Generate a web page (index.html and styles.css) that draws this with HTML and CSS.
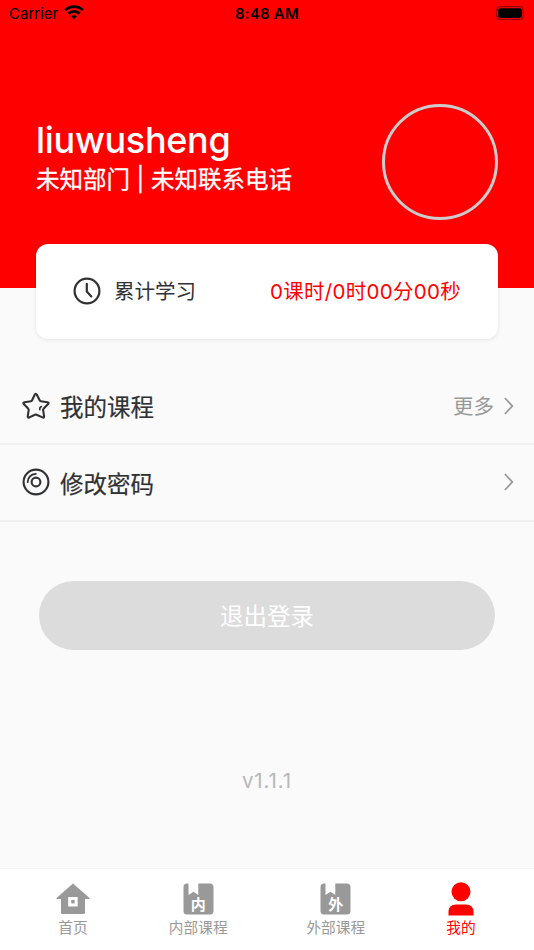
FILE: index.html
```html
<!DOCTYPE html>
<html lang="zh-CN">
<head>
<meta charset="utf-8">
<title>我的</title>
<link rel="stylesheet" href="styles.css">
</head>
<body>
<div class="app">
  <header class="hero">
    <div class="status">
      <div class="carrier"><span>Carrier</span>
        <svg width="20" height="15" viewBox="0 0 20 15" fill="none" stroke="#000" stroke-width="2.9"><path d="M1.2 5.2C6.2.4 13.8.4 18.8 5.2M4.4 8.6c3.2-3 8-3 11.2 0"/><path d="M10 14.2 7.1 11.3c1.7-1.5 4.1-1.5 5.8 0z" fill="#000" stroke="none"/></svg>
      </div>
      <div class="time">8:48 AM</div>
      <svg class="battery" width="32" height="15" viewBox="0 0 32 15"><rect x=".7" y=".7" width="26.6" height="12.8" rx="3.5" fill="none" stroke="#9b0000" stroke-width="1.2"/><rect x="2.2" y="2.2" width="23.6" height="9.8" rx="2"/><path d="M29 5q2.2 2.1 0 4.2z" fill="#9b0000"/></svg>
    </div>
    <div class="profile">
      <div class="who"><h1>liuwusheng</h1><p>未知部门 | 未知联系电话</p></div>
      <div class="avatar"></div>
    </div>
  </header>
  <section class="card">
    <svg width="28" height="28" viewBox="0 0 28 28" fill="none" stroke="#303133" stroke-width="2.2" stroke-linecap="round" stroke-linejoin="round"><circle cx="14" cy="14" r="12.4"/><path d="M13.8 6.8v7.8l4.5 4.8"/></svg>
    <span class="card-label">累计学习</span>
    <span class="card-value">0课时/0时00分00秒</span>
  </section>
  <nav class="menu">
    <div class="row">
      <svg width="28" height="28" viewBox="0 0 28 28" fill="none" stroke="#303133" stroke-width="2.1" stroke-linecap="round" stroke-linejoin="round"><path d="M12.7 2.8q1.1-2 2.2 0l2.9 5.7q.3.6 1 .7l6.7 1q1.9.4.6 1.9l-4.6 4.7q-.5.6-.4 1.3l1 6.2q.1 1.9-1.6 1.1l-5.9-2.7q-.8-.4-1.6 0l-5.7 2.7q-1.8.7-1.6-1.2l1-6.1q.1-.7-.4-1.3l-4.500-4.700q-1.200-1.500.7-1.900l6.500-1q.7-.1 1-.7z"/><path d="M19.4 14.6q-2 .9-1.600 3.100" stroke-width="1.6"/></svg>
      <span class="label">我的课程</span><span class="more">更多</span>
      <svg class="chevron" width="10" height="18" viewBox="0 0 10 18"><path d="m.9 1 7.4 8-7.4 8"/></svg>
    </div>
    <div class="row">
      <svg width="28" height="28" viewBox="0 0 28 28" fill="none" stroke="#303133" stroke-width="2.1" stroke-linecap="round"><circle cx="14" cy="14" r="12.4"/><circle cx="14" cy="14" r="4.4"/><path d="M5.7 14q.3-7.500 8.200-8.200" stroke-width="1.8"/></svg>
      <span class="label">修改密码</span>
      <svg class="chevron" width="10" height="18" viewBox="0 0 10 18"><path d="m.9 1 7.4 8-7.4 8"/></svg>
    </div>
  </nav>
  <button class="logout">退出登录</button>
  <div class="version">v1.1.1</div>
  <footer class="tabs">
    <div class="tab">
      <svg width="34" height="34" viewBox="0 0 34 34" fill="#999"><path d="M17 1.5 33.5 16v1H29v13.5q0 1.5-1.5 1.5h-21Q5 32 5 30.5V17H.5v-1z"/><path fill="#fff" d="M12.2 15h9.5v9.5h-9.500z"/><path d="M15.3 18h3.300v3.400h-3.300z"/></svg>
      <span>首页</span>
    </div>
    <div class="tab">
      <div class="book"><svg width="31" height="32" viewBox="0 0 31 32"><path fill="#999" d="M4 .5h1.5V12l5-3.200 4.800 3.200V.5H27q3.5 0 3.5 3.500v24q0 3.500-3.500 3.500H4Q.5 31.5.5 28V4Q.5.5 4 .5z"/></svg><b>内</b></div>
      <span>内部课程</span>
    </div>
    <div class="tab">
      <div class="book"><svg width="31" height="32" viewBox="0 0 31 32"><path fill="#999" d="M4 .5h1.5V12l5-3.200 4.800 3.200V.5H27q3.5 0 3.5 3.500v24q0 3.500-3.500 3.500H4Q.5 31.5.5 28V4Q.5.5 4 .5z"/></svg><b>外</b></div>
      <span>外部课程</span>
    </div>
    <div class="tab active">
      <svg width="34" height="34" viewBox="0 0 34 34" fill="#f00"><circle cx="17" cy="9.7" r="9.5"/><path d="M4.5 33.5V30q0-7.500 7.500-7.500h10q7.500 0 7.500 7.500v3.500z"/></svg>
      <span>我的</span>
    </div>
  </footer>
</div>
</body>
</html>
```
FILE: styles.css
```css
* { box-sizing: border-box; }
body { margin: 0; font-family: Inter, "Noto Sans CJK SC", sans-serif; background: #fafafa; color: #303133; }
.app { height: 950px; display: flex; flex-direction: column; overflow: hidden; }
svg { display: block; flex: none; }
.hero { flex: none; height: 288px; background: #f00; }
.status { height: 28px; padding: 0 7px 0 9px; display: grid; grid-template-columns: 1fr auto 1fr; align-items: center; color: #000; }
.carrier { display: flex; align-items: center; gap: 6px; font-size: 15px; line-height: 28px; }
.carrier svg { margin-top: -3px; }
.time { margin: -1px 2px 0 0; font-size: 15px; font-weight: 600; letter-spacing: .2px; }
.battery { justify-self: end; margin-right: -1px; margin-top: -2px; }
.profile { margin-top: 76px; padding: 0 36px; display: flex; justify-content: space-between; color: #fff; }
.who { padding-top: 14px; }
h1 { margin: 0; font-size: 36px; line-height: 44px; font-weight: 500; letter-spacing: -.3px; }
p { margin: 1px 0 0; font-size: 23.5px; line-height: 34px; -webkit-text-stroke: .3px #fff; white-space: nowrap; }
.avatar { width: 116px; height: 116px; border: 3px solid #ccc; border-radius: 50%; }
.card { position: relative; flex: none; height: 95px; margin: -44px 36px 0; padding: 0 37px 2px; border-radius: 12px; background: #fff; box-shadow: 0 1px 4px rgba(0,0,0,.09); display: flex; align-items: center; font-size: 20.5px; }
.card-label, .card-value { margin-top: -1px; }
.card-label { margin-left: 13px; }
.card-value { margin-left: auto; color: #f00; letter-spacing: .3px; }
.menu { margin-top: 29px; }
.row { height: 77px; padding: 0 20px 0 22px; display: flex; align-items: center; border-bottom: 2px solid #f0f0f0; }
.row:last-child { padding-bottom: 2px; }
.row:last-child .label { margin-top: 2px; }
.label { margin-left: 10px; font-size: 23.5px; -webkit-text-stroke: .2px #303133; }
.more { margin: -2px 10px 0 auto; color: #999; font-size: 20.5px; }
.chevron { margin-left: auto; }
.more + .chevron { margin-left: 0; }
.chevron path { fill: none; stroke: #999; stroke-width: 1.8; }
.logout { flex: none; height: 69px; margin: 59px 39px 0; padding: 3px 0 0; border: 0; border-radius: 35px; background: #dcdcdc; color: #fff; font: 23.5px/66px Inter, "Noto Sans CJK SC", sans-serif; }
.version { margin-top: 116px; text-align: center; color: #b8b8b8; font-size: 20.5px; line-height: 30px; letter-spacing: .9px; }
.tabs { margin-top: auto; height: 82px; padding: 13px 56px 0; border-top: 1px solid #f3f3f3; background: #fff; display: flex; justify-content: space-between; }
.tab { min-width: 33px; display: flex; flex-direction: column; align-items: center; color: #999; font-size: 14.7px; line-height: 24px; }
.tab.active { color: #f00; }
.book { position: relative; height: 34px; padding-top: 1px; }
.book b { position: absolute; left: 7px; top: 13px; width: 17px; text-align: center; color: #fff; font-size: 15px; line-height: 20px; }
```
